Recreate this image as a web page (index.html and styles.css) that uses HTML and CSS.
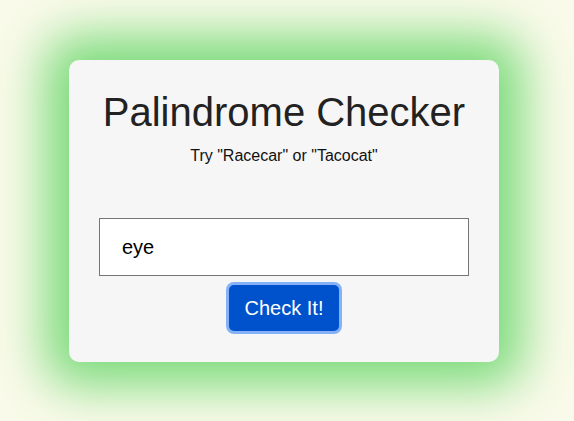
FILE: index.html
```html
<!DOCTYPE html>
<html lang="en">
<head>
<meta charset="utf-8">
<title>Palindrome Checker</title>
<link rel="stylesheet" href="styles.css">
</head>
<body>
<main class="stage">
  <section class="card">
    <h1 class="title">Palindrome Checker</h1>
    <p class="hint">Try "Racecar" or "Tacocat"</p>
    <input class="field" type="text" value="eye">
    <button class="check" type="button">Check It!</button>
  </section>
</main>
</body>
</html>
```

FILE: styles.css
```css
html, body {
  margin: 0;
  height: 100%;
}
body {
  background: #fafaea;
  font-family: "Liberation Sans", Arial, sans-serif;
  overflow: hidden;
}
.stage {
  display: flex;
  justify-content: center;
  padding: 60px 6px 0 0;
}
.card {
  box-sizing: border-box;
  width: 430px;
  height: 302px;
  background: #f6f6f6;
  border-radius: 10px;
  box-shadow: 0 0 50px 24px #7bdb7b;
  padding: 29px 30px 0;
  display: flex;
  flex-direction: column;
  align-items: center;
}
.title {
  margin: 0;
  font-size: 40px;
  font-weight: 400;
  color: #222;
  line-height: 46px;
}
.hint {
  margin: 12px 0 0;
  font-size: 16px;
  line-height: 18px;
  color: #111;
}
.field {
  box-sizing: border-box;
  margin-top: 53px;
  width: 370px;
  height: 58px;
  border: 1px solid #767676;
  background: #fff;
  padding: 0 22px;
  font-family: "Liberation Sans", Arial, sans-serif;
  font-size: 20px;
  color: #000;
  outline: none;
}
.check {
  margin-top: 9px;
  width: 110px;
  height: 46px;
  border: none;
  border-radius: 5px;
  background: #0052cc;
  color: #fff;
  font-family: "Liberation Sans", Arial, sans-serif;
  font-size: 20px;
  box-shadow: 0 0 0 3px #85b1f6;
  padding: 0;
}
```
